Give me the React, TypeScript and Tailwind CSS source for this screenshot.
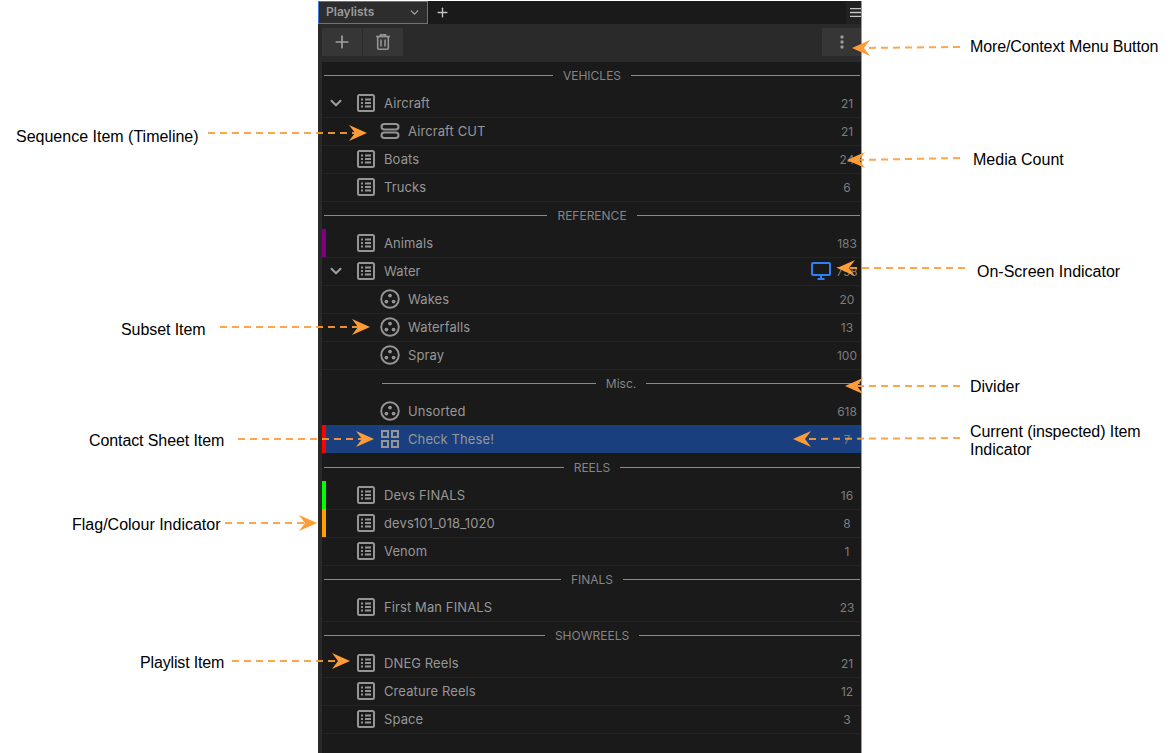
import React from 'react';
import { ChevronDown, Plus } from 'lucide-react';

type Kind = 'playlist' | 'timeline' | 'subset' | 'sheet';

interface RowItem {
  type?: 'row';
  name: string;
  count: string;
  kind: Kind;
  child?: boolean;
  open?: boolean;
  flag?: string;
  active?: boolean;
  onScreen?: boolean;
}

interface HeaderItem {
  type: 'header';
  name: string;
  sub?: boolean;
  first?: boolean;
}

const ITEMS: (RowItem | HeaderItem)[] = [
  { type: 'header', name: 'VEHICLES', first: true },
  { name: 'Aircraft', count: '21', kind: 'playlist', open: true },
  { name: 'Aircraft CUT', count: '21', kind: 'timeline', child: true },
  { name: 'Boats', count: '24', kind: 'playlist' },
  { name: 'Trucks', count: '6', kind: 'playlist' },
  { type: 'header', name: 'REFERENCE' },
  { name: 'Animals', count: '183', kind: 'playlist', flag: 'bg-[#800080]' },
  { name: 'Water', count: '758', kind: 'playlist', open: true, onScreen: true },
  { name: 'Wakes', count: '20', kind: 'subset', child: true },
  { name: 'Waterfalls', count: '13', kind: 'subset', child: true },
  { name: 'Spray', count: '100', kind: 'subset', child: true },
  { type: 'header', name: 'Misc.', sub: true },
  { name: 'Unsorted', count: '618', kind: 'subset', child: true },
  { name: 'Check These!', count: '7', kind: 'sheet', child: true, active: true, flag: 'bg-[#ff0000]' },
  { type: 'header', name: 'REELS' },
  { name: 'Devs FINALS', count: '16', kind: 'playlist', flag: 'bg-[#00ff00]' },
  { name: 'devs101_018_1020', count: '8', kind: 'playlist', flag: 'bg-[#ffa000]' },
  { name: 'Venom', count: '1', kind: 'playlist' },
  { type: 'header', name: 'FINALS' },
  { name: 'First Man FINALS', count: '23', kind: 'playlist' },
  { type: 'header', name: 'SHOWREELS' },
  { name: 'DNEG Reels', count: '21', kind: 'playlist' },
  { name: 'Creature Reels', count: '12', kind: 'playlist' },
  { name: 'Space', count: '3', kind: 'playlist' },
];

// x1,y1 = tail of the dashed line, x2,y2 = arrow tip
const ARROWS = [
  [960, 47, 852, 48],
  [208, 133, 367, 133],
  [960, 158, 847, 160],
  [965, 268, 837, 268],
  [220, 327, 370, 327],
  [960, 386, 845, 386],
  [238, 439, 374, 439],
  [960, 438, 793, 439],
  [225, 523, 317, 523],
  [232, 661, 350, 661],
];

const LABELS = [
  { text: 'More/Context Menu Button', cls: 'left-[970px] top-[37px] tracking-[-0.12px]' },
  { text: 'Sequence Item (Timeline)', cls: 'left-[16px] top-[127px]' },
  { text: 'Media Count', cls: 'left-[973px] top-[150px]' },
  { text: 'On-Screen Indicator', cls: 'left-[977px] top-[262px]' },
  { text: 'Subset Item', cls: 'left-[121px] top-[320px] tracking-[-0.08px]' },
  { text: 'Divider', cls: 'left-[970px] top-[377px]' },
  { text: 'Contact Sheet Item', cls: 'left-[89px] top-[431px] tracking-[-0.1px]' },
  { text: 'Current (inspected) Item', cls: 'left-[970px] top-[422px] tracking-[-0.08px]' },
  { text: 'Indicator', cls: 'left-[970px] top-[440px]' },
  { text: 'Flag/Colour Indicator', cls: 'left-[72px] top-[515px]' },
  { text: 'Playlist Item', cls: 'left-[140px] top-[653px] tracking-[-0.15px]' },
];

function ItemIcon({ kind }: { kind: Kind }) {
  if (kind === 'timeline') {
    return (
      <svg width="20" height="16" viewBox="0 0 20 16" fill="none" stroke="#959595" strokeWidth="2">
        <rect x="1.5" y="1" width="17" height="5.5" rx="2.75" />
        <rect x="1.5" y="9.5" width="17" height="5.5" rx="2.75" />
      </svg>
    );
  }
  if (kind === 'subset') {
    return (
      <svg width="20" height="20" viewBox="0 0 20 20" fill="none">
        <circle cx="10" cy="10" r="8.8" stroke="#959595" strokeWidth="1.9" />
        <circle cx="10" cy="6.6" r="1.9" fill="#959595" />
        <circle cx="6.4" cy="12.6" r="1.9" fill="#959595" />
        <circle cx="13.6" cy="12.6" r="1.9" fill="#959595" />
      </svg>
    );
  }
  if (kind === 'sheet') {
    return (
      <svg width="18" height="18" viewBox="0 0 18 18" fill="none" stroke="#959595" strokeWidth="2">
        <rect x="1" y="1" width="6" height="6" />
        <rect x="11" y="1" width="6" height="6" />
        <rect x="1" y="11" width="6" height="6" />
        <rect x="11" y="11" width="6" height="6" />
      </svg>
    );
  }
  return (
    <svg width="18" height="18" viewBox="0 0 18 18" fill="none" stroke="#959595">
      <rect x="1" y="1" width="16" height="16" rx="1.5" strokeWidth="2" />
      <path d="M4 5.5h2M8 5.5h6M4 9h2M8 9h6M4 12.5h2M8 12.5h6" strokeWidth="1.8" />
    </svg>
  );
}

function SectionHeader({ item }: { item: HeaderItem }) {
  return (
    <div
      className={`flex items-center gap-[10px] pr-px ${item.first ? 'h-[27px]' : 'h-7'} ${
        item.sub ? 'pl-[60px]' : 'pl-[2px]'
      }`}
    >
      <div className="h-px flex-1 bg-[#8a8a8a]" />
      <span className={`text-[12px] text-[#858585] ${item.first ? '' : 'pt-[2px]'}`}>{item.name}</span>
      <div className="h-px flex-1 bg-[#8a8a8a]" />
    </div>
  );
}

function PlaylistRow({ item }: { item: RowItem }) {
  return (
    <div className={`relative flex h-7 items-center ${item.active ? 'z-10 bg-[#1a3f7e]' : ''}`}>
      {item.flag && <div className={`absolute inset-y-0 left-0 w-1 ${item.flag}`} />}
      {/* separator sits on the first pixel of whatever comes next */}
      {!item.active && <div className="absolute inset-x-0 -bottom-px h-px bg-[#242424]" />}
      <div className="flex w-[34px] shrink-0 pl-[5px]">
        {item.open && <ChevronDown size={18} strokeWidth={2.6} color="#a0a0a0" />}
      </div>
      <div className={`flex w-5 shrink-0 justify-center ${item.child ? 'ml-6' : ''}`}>
        <ItemIcon kind={item.kind} />
      </div>
      <span className="ml-2 flex-1 pt-[2px] text-[13px] tracking-[0.1px] text-[#979797]">{item.name}</span>
      {item.onScreen && (
        <svg width="20" height="18" viewBox="0 0 20 18" fill="none" className="mr-[2px]">
          <rect x="1" y="1" width="18" height="12" rx="1" stroke="#2f7ff5" strokeWidth="2" />
          <path d="M10 14v2M6.5 17h7" stroke="#2f7ff5" strokeWidth="2" />
        </svg>
      )}
      <span className="w-7 shrink-0 pt-[2px] text-center text-[12px] text-[#7d7d7d]">{item.count}</span>
    </div>
  );
}

function PlaylistsPanel() {
  return (
    <div className="ml-[318px] flex h-[752px] w-[544px] flex-col border-r border-[#9a9a9a] bg-[#2a2a2a] font-['Inter',sans-serif]">
      {/* tab bar */}
      <div className="flex h-[23px] shrink-0 items-center bg-[#1a1a1a]">
        <div className="flex h-full w-[110px] items-center justify-between border border-[#3b78d8] bg-[#2d2d2d] pb-px pl-[7px] pr-[6px] text-[12px] font-semibold text-[#9a9a9a]">
          Playlists
          <ChevronDown size={13} strokeWidth={2.2} color="#a8a8a8" />
        </div>
        <Plus size={15} strokeWidth={2.2} color="#c4c4c4" className="ml-[7px]" />
        <div className="ml-auto flex h-full w-[15px] items-center justify-end bg-[#222222]">
          <svg width="11" height="9" viewBox="0 0 11 9" stroke="#c4c4c4" strokeWidth="1.3">
            <path d="M0 .7h11M0 4.5h11M0 8.3h11" />
          </svg>
        </div>
      </div>

      {/* toolbar */}
      <div className="flex h-[38px] shrink-0 items-center gap-px bg-[#2a2a2a] pb-[2px] pl-[4px]">
        <button className="flex h-7 w-10 items-center justify-center bg-[#363636]">
          <Plus size={20} strokeWidth={2} color="#a0a0a0" />
        </button>
        <button className="flex h-7 w-10 items-center justify-center bg-[#363636]">
          <svg width="14" height="16" viewBox="0 0 14 16" fill="none" stroke="#959595" strokeWidth="1.6">
            <path d="M0 2.5h14M4.5 2.5V.8h5v1.7" />
            <rect x="1.7" y="2.5" width="10.6" height="12.7" rx="1.2" />
            <path d="M5 5.5v7M9 5.5v7" />
          </svg>
        </button>
        <button className="ml-auto flex h-7 w-[39px] items-center justify-center bg-[#363636]">
          <svg width="4" height="14" viewBox="0 0 4 14" fill="#9a9a9a">
            <circle cx="2" cy="2" r="1.7" />
            <circle cx="2" cy="7" r="1.7" />
            <circle cx="2" cy="12" r="1.7" />
          </svg>
        </button>
      </div>

      {/* list */}
      <div className="ml-[4px] flex-1 bg-[#1a1a1a]">
        {ITEMS.map((item) =>
          item.type === 'header' ? (
            <SectionHeader key={item.name} item={item} />
          ) : (
            <PlaylistRow key={item.name} item={item} />
          )
        )}
      </div>
    </div>
  );
}

function Annotations() {
  return (
    <>
      <svg width="1175" height="753" className="pointer-events-none absolute left-0 top-0 z-20">
        {ARROWS.map(([x1, y1, x2, y2]) => {
          const dir = x2 > x1 ? 1 : -1;
          const tip = `${x2},${y2} ${x2 - 18 * dir},${y2 - 8} ${x2 - 12 * dir},${y2} ${x2 - 18 * dir},${y2 + 8}`;
          return (
            <g key={`${x1}-${y1}`}>
              <line
                x1={x1}
                y1={y1}
                x2={x2 - 10 * dir}
                y2={y2}
                stroke="#ff9c38"
                strokeWidth="2"
                strokeDasharray="7 5"
                opacity="0.9"
              />
              <polygon points={tip} fill="#ff9c38" />
            </g>
          );
        })}
      </svg>
      {LABELS.map((label) => (
        <span
          key={label.text}
          className={`absolute whitespace-nowrap font-['Liberation_Sans',sans-serif] text-[16px] leading-[20px] text-black ${label.cls}`}
        >
          {label.text}
        </span>
      ))}
    </>
  );
}

export default function App() {
  return (
    <div className="relative h-[753px] w-[1175px] overflow-hidden bg-white pt-px">
      <PlaylistsPanel />
      <Annotations />
    </div>
  );
}
